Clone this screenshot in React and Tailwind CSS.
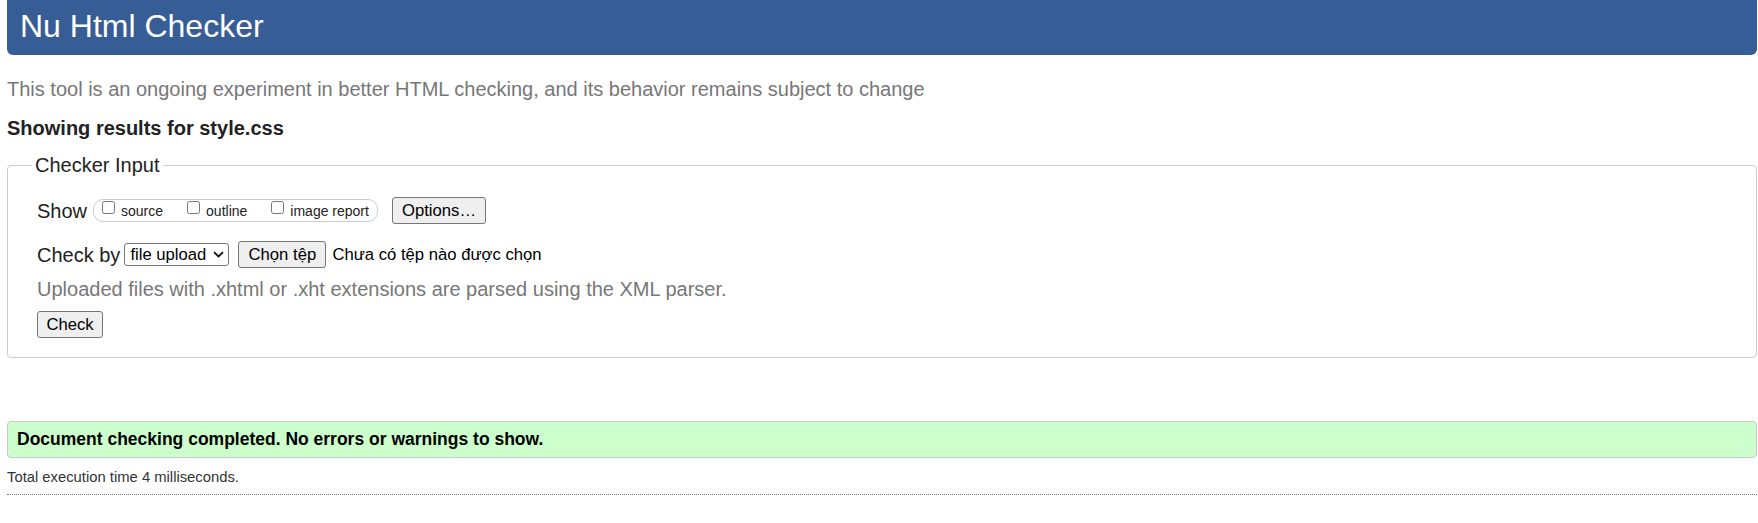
/**
 * Nu Html Checker - result page
 */
function Checkbox({ label, className = '' }) {
  return (
    <label className={`flex items-start gap-[6px] ${className}`}>
      <input type="checkbox" className="mt-[1px] w-[13px] h-[13px]" />
      <span className="mt-[3px] text-[14px] leading-[16px]">{label}</span>
    </label>
  );
}

function Button({ children, className = '' }) {
  return (
    <button
      type="button"
      className={`h-[27px] bg-[#efefef] border border-[#767676] rounded-[3px] text-[16.67px] leading-[25px] text-black text-center ${className}`}
    >
      {children}
    </button>
  );
}

export default function App() {
  return (
    <div className="w-[1758px] h-[523px] overflow-hidden bg-white pl-[7px] pr-px font-['Liberation_Sans',Arial,sans-serif] text-[#222]">
      {/* ========== header ========== */}
      <header className="h-[55px] bg-[#365d95] rounded-b-[6px] pl-[13px] pt-[6px]">
        <h1 className="text-white text-[32px] leading-[40px] font-normal">Nu Html Checker</h1>
      </header>

      <p className="mt-[22px] text-[20px] leading-[24px] text-[#777]">
        This tool is an ongoing experiment in better HTML checking, and its behavior remains subject to change
      </p>

      <p className="mt-[15px] text-[20px] leading-[24px] font-bold">Showing results for style.css</p>

      {/* ========== checker input ========== */}
      <fieldset className="mt-[13px] border border-[#ccc] rounded-[4px] px-[29px] pt-[20px] pb-[19px]">
        <legend className="-ml-[5px] px-[3px] text-[20px] leading-[24px]">Checker Input</legend>

        <div className="flex items-center h-[27px]">
          <span className="text-[20px] leading-[24px]">Show</span>
          <div className="ml-[6px] w-[285px] h-[23px] border border-[#ccc] rounded-[10px] flex items-start pl-[8px]">
            <Checkbox label="source" />
            <Checkbox label="outline" className="ml-[24px]" />
            <Checkbox label="image report" className="ml-[24px]" />
          </div>
          <Button className="ml-[14px] w-[94px]">Options…</Button>
        </div>

        <div className="mt-[17px] flex items-center h-[27px]">
          <span className="text-[20px] leading-[24px]">Check by</span>
          <div className="ml-[4px] w-[105px] h-[23px] border border-[#767676] rounded-[3px] bg-white flex items-center justify-between pl-[5px] pr-[4px] text-[16.67px] text-black">
            <span>file upload</span>
            <svg width="11" height="7" viewBox="0 0 11 7" fill="none">
              <path d="M1 1.2 L5.5 5.5 L10 1.2" stroke="#111" strokeWidth="1.8" />
            </svg>
          </div>
          <Button className="ml-[9px] w-[88px]">Chọn tệp</Button>
          <span className="ml-[6px] text-[16.67px] text-black">Chưa có tệp nào được chọn</span>
        </div>

        <p className="mt-[9px] text-[20px] leading-[24px] text-[#777]">
          Uploaded files with .xhtml or .xht extensions are parsed using the XML parser.
        </p>

        <Button className="mt-[10px] w-[66px] block">Check</Button>
      </fieldset>

      {/* ========== result ========== */}
      <div className="mt-[63px] border border-[#c8c8c8] rounded-[4px] bg-[#ccffcc] pl-[9px] text-[17.5px] leading-[35px] font-bold text-black">
        Document checking completed. No errors or warnings to show.
      </div>

      <p className="mt-[11px] text-[14.8px] leading-[17px] text-[#333]">Total execution time 4 milliseconds.</p>

      <div className="mt-[8px] border-t border-dotted border-[#777]" />
    </div>
  );
}
